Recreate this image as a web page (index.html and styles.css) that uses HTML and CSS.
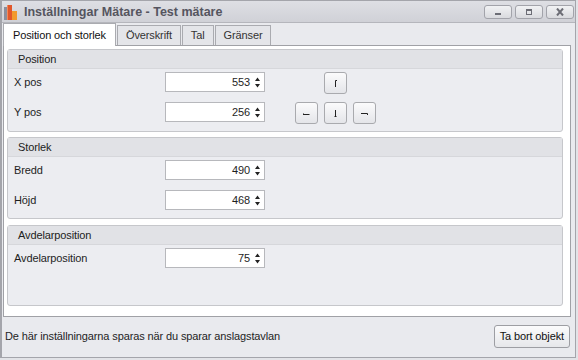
FILE: index.html
```html
<html>
<head>
	<meta charset="utf-8">
	<title>Inställningar Mätare</title>
	<link rel="stylesheet" href="styles.css">
</head>
<body>

<div class="window">

	<div class="titlebar">
		<svg class="appicon" width="16" height="16" viewBox="0 0 16 16">
			<rect x="1" y="3" width="3" height="13" fill="#8b8e9c"/>
			<rect x="4" y="1" width="5" height="15" fill="#e2572b"/>
			<rect x="9" y="7" width="5" height="9" fill="#f29a2e"/>
			<rect x="4" y="1" width="1" height="15" fill="#f08a5e"/>
		</svg>
		<span class="title">Inställningar Mätare - Test mätare</span>
		<div class="controls">
			<span class="ctl"><svg width="10" height="8" viewBox="0 0 10 8"><rect x="2" y="5" width="6" height="2" fill="#6c6d75"/></svg></span>
			<span class="ctl"><svg width="10" height="8" viewBox="0 0 10 8"><rect x="2.5" y="1.5" width="5" height="5" fill="none" stroke="#6c6d75" stroke-width="1"/><rect x="2" y="1" width="6" height="2" fill="#6c6d75"/></svg></span>
			<span class="ctl"><svg width="10" height="8" viewBox="0 0 10 8"><path d="M2 0.5 L8 7.5 M8 0.5 L2 7.5" stroke="#6c6d75" stroke-width="2"/></svg></span>
		</div>
	</div>

	<div class="tabs">
		<div class="tab active">Position och storlek</div>
		<div class="tab">Överskrift</div>
		<div class="tab">Tal</div>
		<div class="tab">Gränser</div>
	</div>

	<div class="panel">

		<div class="group g1">
			<div class="group-head">Position</div>
			<div class="group-body">
				<div class="row">
					<label>X pos</label>
					<div class="spin"><span class="val">553</span><svg class="arr" width="7" height="13" viewBox="0 0 7 13"><path d="M3.5 1.5 L6 5 L1 5 Z M3.5 11.5 L6 8 L1 8 Z" fill="#222"/></svg></div>
					<div class="pad">
						<span class="nbtn hidden"></span>
						<span class="nbtn"><svg width="9" height="9" viewBox="0 0 9 9"><path d="M4.5 1.5 V8 M4.5 1.5 H6" stroke="#222" stroke-width="1" fill="none"/></svg></span>
					</div>
				</div>
				<div class="row">
					<label>Y pos</label>
					<div class="spin"><span class="val">256</span><svg class="arr" width="7" height="13" viewBox="0 0 7 13"><path d="M3.5 1.5 L6 5 L1 5 Z M3.5 11.5 L6 8 L1 8 Z" fill="#222"/></svg></div>
					<div class="pad">
						<span class="nbtn"><svg width="9" height="9" viewBox="0 0 9 9"><path d="M1 5.5 H7.5 M1.5 4.5 V6" stroke="#222" stroke-width="1" fill="none"/></svg></span>
						<span class="nbtn"><svg width="9" height="9" viewBox="0 0 9 9"><path d="M4.5 1 V7.5 M3.5 7.5 H5.5" stroke="#222" stroke-width="1" fill="none"/></svg></span>
						<span class="nbtn"><svg width="9" height="9" viewBox="0 0 9 9"><path d="M1 4.5 H7.5 V6" stroke="#222" stroke-width="1" fill="none"/></svg></span>
					</div>
				</div>
			</div>
		</div>

		<div class="group g2">
			<div class="group-head">Storlek</div>
			<div class="group-body">
				<div class="row">
					<label>Bredd</label>
					<div class="spin"><span class="val">490</span><svg class="arr" width="7" height="13" viewBox="0 0 7 13"><path d="M3.5 1.5 L6 5 L1 5 Z M3.5 11.5 L6 8 L1 8 Z" fill="#222"/></svg></div>
				</div>
				<div class="row">
					<label>Höjd</label>
					<div class="spin"><span class="val">468</span><svg class="arr" width="7" height="13" viewBox="0 0 7 13"><path d="M3.5 1.5 L6 5 L1 5 Z M3.5 11.5 L6 8 L1 8 Z" fill="#222"/></svg></div>
				</div>
			</div>
		</div>

		<div class="group g3">
			<div class="group-head">Avdelarposition</div>
			<div class="group-body">
				<div class="row">
					<label>Avdelarposition</label>
					<div class="spin"><span class="val">75</span><svg class="arr" width="7" height="13" viewBox="0 0 7 13"><path d="M3.5 1.5 L6 5 L1 5 Z M3.5 11.5 L6 8 L1 8 Z" fill="#222"/></svg></div>
				</div>
			</div>
		</div>

	</div>

	<div class="footer">
		<span>De här inställningarna sparas när du sparar anslagstavlan</span>
		<span class="btn">Ta bort objekt</span>
	</div>

</div>

</body>
</html>
```

FILE: styles.css
```css
* {
	margin: 0;
	padding: 0;
	box-sizing: border-box;
}

body {
	font: 11px "Liberation Sans", Arial, sans-serif;
	letter-spacing: -0.12px;
	color: #1e1e1e;
	background: #e2e3e7;
}


.window {
	width: 576px;
	height: 358px;
	border: 1px solid #a4a5ab;
	border-left-width: 2px;
	background: #e9eaee;
	display: flex;
	flex-direction: column;
}


/* Title bar */

.titlebar {
	height: 22px;
	flex: none;
	display: flex;
	align-items: center;
	padding: 0 1px 0 1px;
	background: linear-gradient(#dedfe4, #d0d1d7);
	border-bottom: 1px solid #b5b6bc;
}

.appicon {
	margin-right: 5px;
}

.title {
	font-weight: bold;
	font-size: 12.5px;
	letter-spacing: 0;
	color: #55555f;
}

.controls {
	margin-left: auto;
	display: flex;
	gap: 3px;
}

.ctl {
	width: 28px;
	height: 14px;
	border: 1px solid #a2a3aa;
	border-radius: 3px;
	background: linear-gradient(#f1f2f4, #d9dade);
	display: flex;
	align-items: center;
	justify-content: center;
}


/* Tabs */

.tabs {
	display: flex;
	align-items: flex-end;
	height: 22px;
	flex: none;
	padding-left: 1px;
}

.tab {
	height: 20px;
	line-height: 19px;
	padding: 0 8px;
	margin-left: 1px;
	border: 1px solid #aaabb0;
	border-bottom: none;
	background: #e4e5e9;
	color: #333;
}

.tab.active {
	height: 23px;
	line-height: 22px;
	margin: 0 0 -1px 0;
	padding: 0 9px;
	background: #fff;
	color: #111;
	position: relative;
	z-index: 1;
}


/* Panel */

.panel {
	flex: none;
	height: 272px;
	margin: 0 4px 0 1px;
	border: 1px solid #a0a1a6;
	background: #fff;
	padding: 3px 7px 0 3px;
}

.group {
	border: 1px solid #c6c7cb;
	border-radius: 3px;
	background: #ecedf1;
	margin-bottom: 5px;
}

.g1 { height: 83px; }
.g2 { height: 82px; margin-bottom: 6px; }
.g3 { height: 81px; }

.group-head {
	height: 19px;
	line-height: 18px;
	padding-left: 10px;
	background: #e1e2e6;
	border-bottom: 1px solid #d6d7db;
	color: #222;
}

.group-body {
	padding: 3px 0 0 6px;
}

.row {
	display: flex;
	align-items: flex-start;
	height: 22px;
	margin-bottom: 8px;
}

.row label {
	width: 151px;
	line-height: 20px;
}

.spin {
	width: 100px;
	height: 20px;
	border: 1px solid #b7b8bc;
	background: #fff;
	display: flex;
	align-items: center;
	justify-content: flex-end;
	padding-right: 3px;
}

.spin .val {
	margin-right: 4px;
}

.pad {
	display: flex;
	gap: 6px;
	margin-left: 30px;
}

.nbtn {
	width: 23px;
	height: 22px;
	border: 1px solid #a9aaae;
	border-radius: 3px;
	background: linear-gradient(#fbfbfc, #e4e5e9);
	display: flex;
	align-items: center;
	justify-content: center;
}

.nbtn.hidden {
	visibility: hidden;
}


/* Footer */

.footer {
	flex: 1;
	display: flex;
	align-items: center;
	justify-content: space-between;
	padding: 0 5px 2px 3px;
}

.btn {
	height: 23px;
	line-height: 21px;
	padding: 0 5px;
	border: 1px solid #9d9ea3;
	border-radius: 3px;
	background: linear-gradient(#fbfbfc, #e6e7ea);
	color: #111;
}
```
